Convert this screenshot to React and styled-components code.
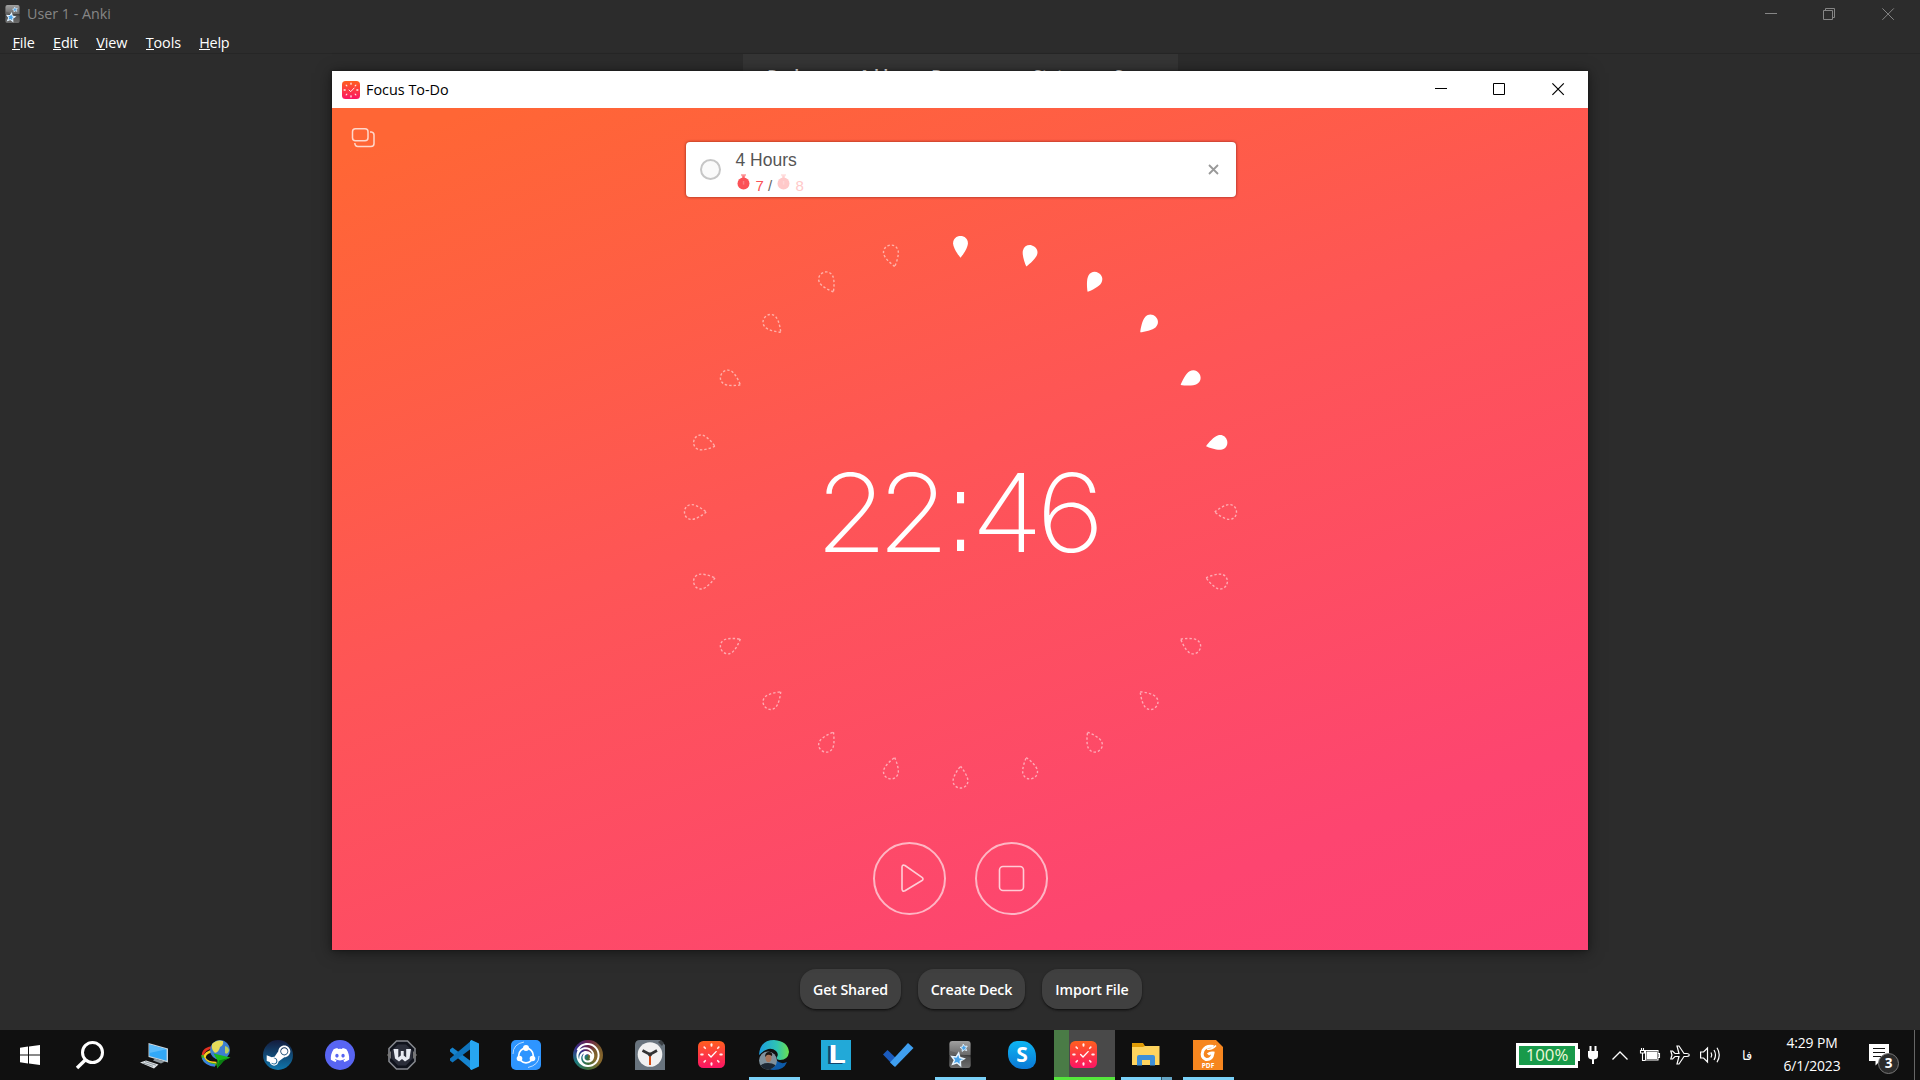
import React from 'react';
import styled, { createGlobalStyle } from 'styled-components';
import { FaDiscord, FaSteamSymbol } from 'react-icons/fa';
import { SiUbisoft } from 'react-icons/si';

const ui = `'Open Sans', 'Noto Sans', sans-serif`;
const arial = `'Liberation Sans', Arial, sans-serif`;

const GlobalStyle = createGlobalStyle`
  * { box-sizing: border-box; }
  body { margin: 0; background: #2c2c2c; overflow: hidden; }
  svg { display: block; overflow: visible; flex: none; }
`;

const Desktop = styled.div`
  position: relative;
  width: 1920px;
  height: 1080px;
  display: flex;
  flex-direction: column;
  background: #2c2c2c;
  font-family: ${ui};
  color: #fff;
  white-space: nowrap;
`;

/* ---------- window chrome ---------- */
const TitleBar = styled.div`
  display: flex;
  align-items: center;
  height: ${(p) => p.$height}px;
  padding: ${(p) => p.$padding};
  background: ${(p) => p.$bg};
  color: ${(p) => p.$color};
`;
const Title = styled.span`
  flex: 1;
  margin-left: ${(p) => p.$gap}px;
  font-size: ${(p) => p.$size || 14.3}px;
  line-height: 20px;
`;
const TitleIcon = styled.div`
  margin-left: 10px;
`;
const WindowButton = styled.div`
  width: 59px;
  display: flex;
  justify-content: center;
`;

const Glyph = ({ kind, w = 1 }) => (
  <svg width="13" height="13" fill="none" stroke="currentColor" strokeWidth={w}>
    {kind === 'min' && <path d="M1 5.5h12" />}
    {kind === 'max' && <path d="M.5 .5h11v11h-11z" />}
    {kind === 'restore' && <path d="M.5 2.5h9v9h-9zM2.5 2.5v-2h9v9h-2" />}
    {kind === 'close' && <path d="M.4 .4l11.400 11.400M11.800 .4L.4 11.800" />}
  </svg>
);

/* ---------- Anki ---------- */
const MenuBar = styled.nav`
  display: flex;
  gap: 18.3px;
  height: 25px;
  padding: 3px 0 0 12.4px;
  border-bottom: 1px solid #262626;
  font-size: 14.4px;
  line-height: 22px;
`;
const MenuItem = styled.span`
  letter-spacing: ${(p) => p.$ls}px;
`;
const MenuKey = styled.span`
  box-shadow: inset 0 -1px 0 #fff;
  display: inline-block;
  height: 18px;
  line-height: 22px;
`;
const DeckArea = styled.main`
  flex: 1;
  display: flex;
  flex-direction: column;
`;
const DeckToolbar = styled.div`
  display: grid;
  grid-template-columns: 92px 72px 102px 81px 60px;
  align-self: center;
  width: 435px;
  height: 45px;
  padding: 10px 0 0 25px;
  background: #353535;
  border-radius: 0 0 5px 5px;
  font-size: 14.6px;
  font-weight: 700;
  line-height: 20px;
  color: #f4f4f4;
`;
const DeckActions = styled.div`
  display: flex;
  gap: 17px;
  margin-top: auto;
  padding: 0 0 21px 800px;
`;
const DeckButton = styled.div`
  width: ${(p) => p.$w}px;
  height: 40px;
  border-radius: 16px;
  background: #404040;
  box-shadow: 0 2px 2px -1px #111, 0 1px 3px rgba(0, 0, 0, 0.35);
  display: flex;
  align-items: center;
  justify-content: center;
  padding-top: 1px;
  font-size: 14.2px;
  font-weight: 600;
  letter-spacing: -0.1px;
`;

/* ---------- Focus To-Do ---------- */
const FocusWindow = styled.section`
  position: absolute;
  left: 332px;
  top: 71px;
  width: 1256px;
  height: 879px;
  display: flex;
  flex-direction: column;
  box-shadow: 0 2px 14px rgba(0, 0, 0, 0.5), 0 0 3px rgba(0, 0, 0, 0.4);
`;
const FocusBody = styled.div`
  flex: 1;
  display: flex;
  flex-direction: column;
  align-items: center;
  background: linear-gradient(160deg, #ff6635 4%, #fe5556 44%, #fd4570 84%, #fc4275 100%);
`;
const FocusTop = styled.div`
  align-self: stretch;
  display: grid;
  grid-template-columns: 335px 550px;
  padding: 20px 0 0 19px;
`;
const TaskCard = styled.div`
  display: flex;
  height: 55px;
  margin-top: 14px;
  padding: 0 17px 0 14px;
  background: #fff;
  border-radius: 4px;
  box-shadow: 0 0 3px rgba(90, 10, 0, 0.7);
  font-family: ${arial};
  color: #555;
`;
const Check = styled.div`
  align-self: center;
  width: 21px;
  height: 21px;
  margin: 0 14.5px 0 0;
  border: 2px solid #c6c6c6;
  border-radius: 50%;
  background: #fafafa;
`;
const TaskText = styled.div`
  flex: 1;
  padding-top: 8px;
`;
const TaskName = styled.div`
  font-size: 17.5px;
  line-height: 20px;
`;
const Pomos = styled.div`
  display: flex;
  align-items: flex-start;
  height: 22px;
  padding: 4px 0 0 1px;
  font-size: 15px;
`;
const Count = styled.span`
  width: ${(p) => p.$w}px;
  padding-left: 5px;
  line-height: 24px;
  color: ${(p) => p.$color};
`;
const Slash = styled.span`
  color: #666;
`;
const CardClose = styled.div`
  align-self: center;
  color: #999;
`;
const Ring = styled.div`
  display: grid;
  place-items: center;
  width: 560px;
  height: 560px;
  margin-top: 35px;
  & > * { grid-area: 1 / 1; }
`;
const Clock = styled.div`
  display: flex;
  height: 120px;
  line-height: 120px;
  margin: 1px 0 0 3px;
  font-family: Inter, ${arial};
  font-weight: 200;
  font-size: 108.5px;
`;
const Digit = styled.span`
  width: ${(p) => p.$w}px;
  display: flex;
  justify-content: center;
  transform: scaleX(1.08);
`;
const Colon = styled(Digit)`
  font-family: ${arial};
  font-size: 112px;
  transform: scaleX(0.66);
`;
const Controls = styled.div`
  display: flex;
  gap: 29px;
  margin: 50px 0 0 1px;
`;
const RoundButton = styled.div`
  width: 73px;
  height: 73px;
  display: grid;
  place-items: center;
  border: 2px solid rgba(255, 255, 255, 0.6);
  border-radius: 50%;
`;

const DROP = 'M0 10.8C-2.6 7.6-7.4.6-7.4-3.8C-7.4-8.3-4-11 0-11S7.4-8.3 7.4-3.8C7.4.6 2.6 7.6 0 10.8Z';
const Drops = () => (
  <svg width="560" height="560" viewBox="-280.5 -280 560 560">
    {Array.from({ length: 24 }, (_, i) => (
      <path
        key={i}
        d={DROP}
        transform={`rotate(${i * 15}) translate(0 -265)`}
        fill={i < 6 ? '#fff' : 'none'}
        stroke={i < 6 ? 'none' : 'rgba(255,255,255,.52)'}
        strokeWidth="1.400"
        strokeDasharray="2.400 2"
      />
    ))}
  </svg>
);

const Tomato = ({ color }) => (
  <svg width="14" height="17" fill={color}>
    <circle cx="6.5" cy="9.5" r="6" />
    <path d="M4 0h5v2.2H4z" opacity=".45" />
    <path d="M5.200 1.500h2.600v3H5.200z" opacity=".8" />
    <path d="M5.8 7h1.5v3.6H5.8z" fill="#fff" opacity=".25" />
  </svg>
);

/* ---------- taskbar ---------- */
const Taskbar = styled.footer`
  display: flex;
  height: 50px;
  background: #101010;
`;
const SystemButton = styled.div`
  display: flex;
  align-items: center;
  justify-content: center;
  width: ${(p) => p.$w}px;
`;
const Task = styled.div`
  width: 62px;
  height: 50px;
  display: flex;
  flex-direction: column;
  align-items: center;
  padding-top: 10px;
  background: ${(p) => (p.$active ? 'linear-gradient(90deg, #101010 1px, #4a7b46 1px 16px, #494949 16px)' : 'none')};
`;
const Running = styled.div`
  align-self: stretch;
  height: 3px;
  margin: auto 5px 0 6px;
  background: ${(p) => (p.$stacked ? 'linear-gradient(90deg, #7ad1f8 40px, #33505f 40px 41px, #64a4c4 41px)' : '#7ad1f8')};
`;
const Progress = styled(Running)`
  margin: auto 0 0 1px;
  background: #55e63c;
`;
const IconPad = styled.div`
  padding: 1px 1px 0 0;
`;
const Badge = styled.div`
  width: 30px;
  height: 30px;
  display: grid;
  place-items: center;
  border-radius: 50%;
  background: ${(p) => p.$bg};
  color: #fff;
`;
const Tray = styled.div`
  display: flex;
  align-items: center;
  margin-left: auto;
`;
const BatteryBox = styled.div`
  display: flex;
  align-items: center;
  &::after { content: ''; width: 2px; height: 12px; background: #fff; }
`;
const BatteryFill = styled.div`
  width: 62px;
  height: 25px;
  border: 3px solid #fff;
  background: #189a4a;
  color: #eef8d8;
  font-size: 16.8px;
  line-height: 18px;
  text-align: center;
`;
const TrayIcon = styled.div`
  width: ${(p) => p.$w}px;
  margin-left: ${(p) => p.$ml}px;
`;
const Language = styled.div`
  width: 12px;
  margin: 0 0 1px 21px;
  font-size: 13px;
`;
const DateTime = styled.div`
  width: 90px;
  margin: 0 1px 2px 13px;
  text-align: center;
  font-size: 13.9px;
  line-height: 23px;
  letter-spacing: -0.1px;
`;
const Notice = styled.div`
  position: relative;
  width: 20px;
  height: 22px;
  margin: 0 25px 0 11px;
`;
const NoticeCount = styled.span`
  position: absolute;
  left: 9px;
  top: 9px;
  width: 21px;
  height: 21px;
  border-radius: 50%;
  border: 1px solid #777;
  background: #2b2b2b;
  font-size: 13.5px;
  font-weight: 700;
  line-height: 19px;
  text-align: center;
`;
const Peek = styled.div`
  width: 6px;
  height: 50px;
  border-left: 1px solid #666;
`;

/* ---------- icons ---------- */
const FocusIcon = ({ size }) => (
  <svg width={size} height={size} viewBox="0 0 28 28">
    <defs>
      <linearGradient id="fg" x2="0" y2="1"><stop stopColor="#ff5f1f" /><stop offset="1" stopColor="#fb1464" /></linearGradient>
    </defs>
    <rect width="28" height="28" rx="5.5" fill="url(#fg)" />
    <g stroke="#fff" strokeLinecap="round" fill="none">
      {Array.from({ length: 8 }, (_, i) => (
        <path key={i} d="M14 3.3v1.6" strokeWidth={i % 2 ? 1.7 : 2} transform={`rotate(${i * 45} 14 14)`} opacity=".9" />
      ))}
      <path d="M11 14l2.5 2.6 5.3-5.6" strokeWidth="1.4" />
    </g>
  </svg>
);
const star = 'M0-5L1.5-1.7 5-1.4 2.4 1 3.2 4.6 0 2.8-3.2 4.6-2.4 1-5-1.4-1.5-1.7Z';
const AnkiIcon = ({ w, h }) => (
  <svg width={w} height={h} viewBox="0 0 22 28">
    <defs>
      <linearGradient id="ak" x2="0" y2="1"><stop stopColor="#a0a0a0" /><stop offset=".5" stopColor="#6c6c6c" /><stop offset=".52" stopColor="#3c3c3c" /><stop offset="1" stopColor="#858585" /></linearGradient>
    </defs>
    <rect width="22" height="28" rx="3" fill="url(#ak)" />
    <path d="M0 10Q12 13 22 17V25q0 3-3 3H3q-3 0-3-3z" fill="#555" opacity=".5" />
    <g fill="#4aa3e8" stroke="#e6f4ff" strokeWidth="1.2">
      <path d={star} transform="translate(8.5 19) rotate(10) scale(1.3)" />
      <path d={star} transform="translate(15 7) rotate(-10) scale(.75)" />
    </g>
  </svg>
);
const Windows = () => (
  <svg width="20" height="20" fill="#fff"><path d="M0 2.7L8 1.6V9.4H0zM9 1.4L20 0V9.4H9zM0 10.5H8V18.4L0 17.3zM9 10.5H20V20L9 18.6z" /></svg>
);
const SearchIcon = () => (
  <svg width="31" height="28" fill="none" stroke="#fff" strokeWidth="3"><circle cx="16.5" cy="11.5" r="10" /><path d="M9.5 18.7L1 27" strokeWidth="3.4" /></svg>
);
const Pc = () => (
  <svg width="30" height="30">
    <path d="M9.500 3l19.500 5.500v14L9.500 17z" fill="#c9d3da" /><path d="M10.300 4.400l17.300 4.800v11.500L10.300 16z" fill="#32a9f8" /><path d="M10.300 4.400l17.300 4.800L10.300 13z" fill="#5cbcfb" />
    <path d="M16 18.500l10 3-4 2-8-3z" fill="#8d979d" /><path d="M1 22.500l6-2 12.500 4-4.500 4z" fill="#dde2e5" /><path d="M4 23l10 3.300M6 21.600l11 3.600" stroke="#8d979d" />
  </svg>
);
const Idm = () => (
  <svg width="30" height="30" fill="none">
    <g strokeWidth="2.4"><path d="M14 7Q1.500 8 2 16q2 7 12 7" stroke="#e03020" /><path d="M14 9.500Q4 11 4 17q2 5 12 5" stroke="#f5d020" transform="translate(-.5 1)" /><path d="M1.500 15q0 9 14 9.500" stroke="#3fae2f" /><path d="M2 18q3 7 12 7.500" stroke="#3a80e0" /></g>
    <circle cx="19" cy="10" r="10" fill="#3e7fcf" /><path d="M11 4q5-5 11-3 1 4-3 6-1 5-5 6-4-3-3-9z" fill="#e5dc5a" /><path d="M24 6q4 1 4 5-2 4-4 2z" fill="#b7cf62" />
    <path d="M12.500 13.500l17 4-6.500 3-7 8 .5-8z" fill="#18b81c" /><path d="M29.500 17.500l-6.500 3-7 8 2-8z" fill="#0b7d12" />
  </svg>
);
const WIcon = () => (
  <svg width="30" height="30">
    <path d="M9.500 1h11L28 8.500v13L20.500 29h-11L2 21.500v-13z" fill="#10131c" stroke="#85888e" strokeWidth="1.600" />
    <path d="M11 4.500h8l6.500 6v8L19 25.500h-8L4.500 18.500v-8z" fill="#2b2e3a" /><path d="M0 15l4-4v8zM30 15l-4-4v8z" fill="#777" />
    <path d="M6.500 9h4.800v8.500l2.500-2V11h2.900v4.500l2.500 2V9H24l-1.500 9.500-4.500 3-3-2.500-3 2.500-4-3z" fill="#e8ebf2" />
  </svg>
);
const Code = () => (
  <svg width="30" height="30">
    <path d="M1 9.500L3.500 7.500 23 22v8L1 11.500z" fill="#1684cf" /><path d="M1 20.500L3.500 22.500 23 8V0L1 18.500z" fill="#0f74bd" />
    <path d="M22.500 0L30 3.500v23L22.500 30l-1.500-1V1z" fill="#27a5f0" />
  </svg>
);
const Shareit = () => (
  <svg width="30" height="30" fill="none">
    <rect width="30" height="30" rx="5" fill="#2e95ff" /><circle cx="15" cy="15.500" r="7.300" stroke="#fff" strokeWidth="1.700" />
    <g fill="#fff"><circle cx="15" cy="8" r="3" /><circle cx="8.500" cy="18.500" r="2.800" /><circle cx="21.500" cy="18.500" r="2.800" /></g>
    <path d="M2 14Q2 4 13 2M28 16q0 9-11 11.500" stroke="#b9dcff" />
  </svg>
);
const AlarmIcon = () => (
  <svg width="30" height="30">
    <path d="M0 5q0-5 5-5h20l5 5v25H0z" fill="#69747e" /><path d="M23 2l3-2 3 3-2 3z" fill="#3b4044" /><circle cx="15" cy="14.500" r="12.300" fill="#f1f1f1" />
    <path d="M7.500 10.500L15 14.500l7-4" stroke="#333" strokeWidth="2.600" fill="none" /><path d="M15 15v10" stroke="#d94a12" strokeWidth="2" /><circle cx="15" cy="14.500" r="2" fill="#333" />
  </svg>
);
const Edge = () => (
  <svg width="30" height="30">
    <defs><linearGradient id="eg"><stop stopColor="#1b9de2" /><stop offset=".6" stopColor="#2fc4b2" /><stop offset="1" stopColor="#6be04f" /></linearGradient></defs>
    <path d="M0 15Q1 0 15 0q14 1 15 12-1 8-9 8-4 0-3-3 2-3-1-6Q10 5 0 15z" fill="url(#eg)" />
    <path d="M17 20q5 5 11 2-3 8-13 8-6 0-9-5z" fill="#0d5aa8" />
    <clipPath id="av"><circle cx="9" cy="20.500" r="9" /></clipPath>
    <g clipPath="url(#av)"><path d="M0 11h18v19H0z" fill="#7f909c" /><path d="M0 31q0-8 9-8t9 7z" fill="#1d2733" /><ellipse cx="9.500" cy="17.500" rx="3" ry="4.800" fill="#a8745a" /><path d="M6 17q0-5 4-5t3 4q-3-2-5-1z" fill="#1b1512" /></g>
  </svg>
);
const LSquare = styled.div`
  width: 30px;
  height: 30px;
  padding-left: 2px;
  background: #22a9d8;
  color: #fff;
  font: 700 26px/28px ${arial};
  text-align: center;
  text-shadow: 0.6px 0 0 #fff, -1.5px 1px 0 #12456e, -2.5px 1px 0 #12456e;
`;
const Todo = () => (
  <svg width="30" height="30"><path d="M0 14.500L4.500 10l10 9.500L11 26z" fill="#1b5bbd" /><path d="M7 22.500L25 3l5.500 5L12 27z" fill="#3f9ff0" /></svg>
);
const SkypeShape = styled.div`
  width: 28px;
  height: 28px;
  margin-top: 1px;
  border-radius: 9px 14px 9px 14px / 10px 15px 9px 15px;
  background: linear-gradient(#0db5f2, #0b78d6);
  font: 700 21px/27px ${ui};
  text-align: center;
`;
const Folder = () => (
  <svg width="30" height="30"><path d="M1 3h11l2 3v4H1z" fill="#e09c06" /><path d="M1 7h11l2-1h14.500v19H1z" fill="#fed45e" /><path d="M6 25.500V17q0-2 2-2h14q2 0 2 2v8.500h-5V20h-8v5.500z" fill="#3d8fd8" /></svg>
);
const FoxitTile = styled.div`
  width: 30px;
  height: 30px;
  display: flex;
  flex-direction: column;
  align-items: center;
  padding-top: 4px;
  background: #f6861f;
  clip-path: polygon(0 0, 23px 0, 30px 7px, 30px 30px, 0 30px);
  font: 700 6.5px/7px ${ui};
`;
const Foxit = () => (
  <FoxitTile>
    <svg width="18" height="18" fill="none" stroke="#fff"><path d="M14.500 2.500Q7 1 4 6.500q-2.500 7 3 9 6 .5 7-6.500-3-.500-5 1.500" strokeWidth="3" /><path d="M8 5q5 1 9-3.500" strokeWidth="1.600" /></svg>
    PDF
  </FoxitTile>
);
const Plug = () => (
  <svg width="10" height="18" fill="#fff"><path d="M1.500 0h2v5h3V0h2v5H10v5q0 3-4 3.500V18H4v-4.500Q0 13 0 10V5h1.500z" /></svg>
);
const Chevron = () => <svg width="16" height="9" fill="none" stroke="#fff" strokeWidth="1.300"><path d="M.5 8.500L8 1l7.500 7.500" /></svg>;
const Charging = () => (
  <svg width="20" height="14" fill="none" stroke="#fff" strokeWidth="1.100"><path d="M5.500 2.500h12.500v9.500H5.500zM18.500 5.500h1v4h-1M1.500 0v2M3.500 0v2M.5 2.500h4v2.500h-4zM2.500 5v7.500h3" /><path d="M6.500 3.500H17V11H6.500z" fill="#fff" stroke="none" /></svg>
);
const Plane = () => (
  <svg width="20" height="20" fill="none" stroke="#fff" strokeWidth="1.200"><path d="M.8 6h1.800l2.400 2.500h4L7 1h2l5 7.500h3q2.300.3 2.300 1.500T17 11.500h-3L9 19H7l2-7.500H5L2.600 14H.8L2 10z" /></svg>
);
const Speaker = () => (
  <svg width="21" height="18" fill="none" stroke="#fff" strokeWidth="1.200"><path d="M.6 6h3L7.500 2v14l-3.900-4h-3z" /><path d="M11 6.500q1.500 2.500 0 5M14 4q3 5 0 10M17 1.800q4.500 7.200 0 14.400" /></svg>
);

const tasks = [
  { icon: <Pc /> },
  { icon: <Idm /> },
  { icon: <Badge $bg="linear-gradient(#141b3c, #0f77ad)"><FaSteamSymbol size={27} /></Badge> },
  { icon: <Badge $bg="#5865f2"><FaDiscord size={20} /></Badge> },
  { icon: <WIcon /> },
  { icon: <Code /> },
  { icon: <Shareit /> },
  { icon: <Badge $bg="conic-gradient(#6b1f4c, #7a5a2c, #8a6a2c, #3f6d3a, #1d7c80, #38308c, #6b1f4c)"><SiUbisoft size={24} /></Badge> },
  { icon: <AlarmIcon /> },
  { icon: <IconPad><FocusIcon size={27} /></IconPad> },
  { icon: <Edge />, mark: <Running /> },
  { icon: <LSquare>L</LSquare> },
  { icon: <Todo /> },
  { icon: <IconPad><AnkiIcon w={22} h={27} /></IconPad>, mark: <Running /> },
  { icon: <SkypeShape>S</SkypeShape> },
  { icon: <IconPad><FocusIcon size={27} /></IconPad>, mark: <Progress />, active: true },
  { icon: <Folder />, mark: <Running $stacked /> },
  { icon: <Foxit />, mark: <Running /> },
];

const menus = [['F', 'ile', -0.1], ['E', 'dit', -0.15], ['V', 'iew', -0.1], ['T', 'ools', -0.1], ['H', 'elp', -0.25]];

export default function App() {
  return (
    <Desktop>
      <GlobalStyle />
      <TitleBar $height={29} $padding="0 2px 1px 5px" $bg="transparent" $color="#868686">
        <AnkiIcon w={15} h={18} />
        <Title $gap={7}>User 1 - Anki</Title>
        <WindowButton><Glyph kind="min" /></WindowButton>
        <WindowButton><Glyph kind="restore" /></WindowButton>
        <WindowButton><Glyph kind="close" /></WindowButton>
      </TitleBar>
      <MenuBar>
        {menus.map(([k, rest, ls]) => (
          <MenuItem key={rest} $ls={ls}><MenuKey>{k}</MenuKey>{rest}</MenuItem>
        ))}
      </MenuBar>
      <DeckArea>
        <DeckToolbar>
          <span>Decks</span><span>Add</span><span>Browse</span><span>Stats</span><span>Sync</span>
        </DeckToolbar>
        <DeckActions>
          <DeckButton $w={101}>Get Shared</DeckButton>
          <DeckButton $w={107}>Create Deck</DeckButton>
          <DeckButton $w={100}>Import File</DeckButton>
        </DeckActions>
      </DeckArea>

      <Taskbar>
        <SystemButton $w={60}><Windows /></SystemButton>
        <SystemButton $w={63}><SearchIcon /></SystemButton>
        {tasks.map((t, i) => (
          <Task key={i} $active={t.active}>{t.icon}{t.mark}</Task>
        ))}
        <Tray>
          <BatteryBox><BatteryFill>100%</BatteryFill></BatteryBox>
          <TrayIcon $w={10} $ml={8}><Plug /></TrayIcon>
          <TrayIcon $w={16} $ml={14}><Chevron /></TrayIcon>
          <TrayIcon $w={20} $ml={12}><Charging /></TrayIcon>
          <TrayIcon $w={20} $ml={10}><Plane /></TrayIcon>
          <TrayIcon $w={21} $ml={10}><Speaker /></TrayIcon>
          <Language>فا</Language>
          <DateTime>4:29 PM<br />6/1/2023</DateTime>
          <Notice>
            <svg width="20" height="22"><path d="M0 0h20v17h-9l-4.500 4.500V17H0z" fill="#fff" /><path d="M4 4.500h12M4 8.500h12M4 12.500h8" stroke="#111" /></svg>
            <NoticeCount>3</NoticeCount>
          </Notice>
          <Peek />
        </Tray>
      </Taskbar>

      <FocusWindow>
        <TitleBar $height={37} $padding="0" $bg="#fff" $color="#000">
          <TitleIcon><FocusIcon size={18} /></TitleIcon>
          <Title $gap={6} $size={14.4}>Focus To-Do</Title>
          <WindowButton><Glyph kind="min" /></WindowButton>
          <WindowButton><Glyph kind="max" /></WindowButton>
          <WindowButton><Glyph kind="close" w={1.2} /></WindowButton>
        </TitleBar>
        <FocusBody>
          <FocusTop>
            <svg width="24" height="20" fill="none" stroke="rgba(255,255,255,.75)" strokeWidth="1.500">
              <rect x="1.500" y=".8" width="15.500" height="12" rx="3" />
              <path d="M19 4h1.500q2.500.3 2.500 3v8.500q0 3-3 3H7Q4 18.500 3.800 15" />
            </svg>
            <TaskCard>
              <Check />
              <TaskText>
                <TaskName>4 Hours</TaskName>
                <Pomos>
                  <Tomato color="#fb5156" />
                  <Count $w={26} $color="#fb5156">7&nbsp;<Slash>/</Slash></Count>
                  <Tomato color="#ffc9c9" />
                  <Count $w={20} $color="#ffc9c9">8</Count>
                </Pomos>
              </TaskText>
              <CardClose>
                <svg width="11" height="11" stroke="currentColor" strokeWidth="1.800"><path d="M1 1l9 9M10 1L1 10" /></svg>
              </CardClose>
            </TaskCard>
          </FocusTop>
          <Ring>
            <Drops />
            <Clock>
              <Digit $w={62.8}>2</Digit>
              <Digit $w={62.8}>2</Digit>
              <Colon $w={31.2}>:</Colon>
              <Digit $w={62}>4</Digit>
              <Digit $w={65}>6</Digit>
            </Clock>
          </Ring>
          <Controls>
            <RoundButton>
              <svg width="28" height="30" fill="none" stroke="rgba(255,255,255,.72)" strokeWidth="1.600" strokeLinejoin="round">
                <path d="M6 3v22q.2 3 3 1.800L26 16.500q2-1.500 0-3.200L9 1.500Q6.200.3 6 3z" />
              </svg>
            </RoundButton>
            <RoundButton>
              <svg width="26" height="26" fill="none" stroke="rgba(255,255,255,.72)" strokeWidth="1.600"><rect x=".5" y=".5" width="24" height="24" rx="3.500" /></svg>
            </RoundButton>
          </Controls>
        </FocusBody>
      </FocusWindow>
    </Desktop>
  );
}
